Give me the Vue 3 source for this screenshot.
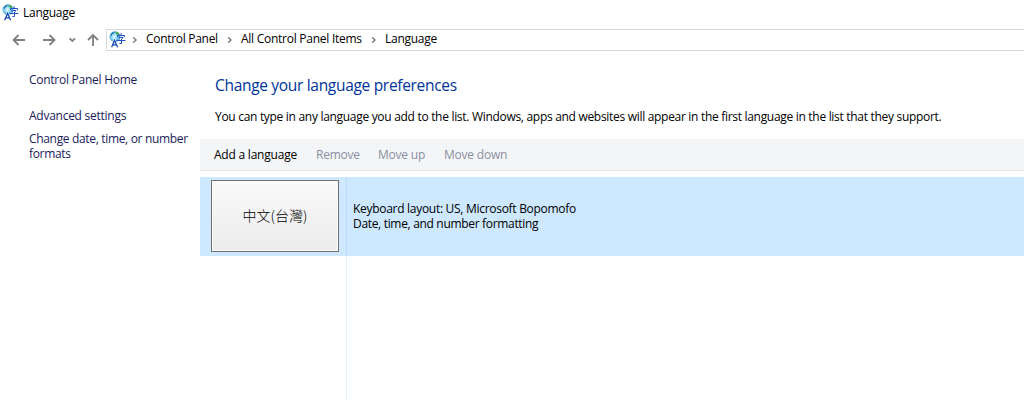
<script setup>
const crumbs = ['Control Panel', 'All Control Panel Items', 'Language']
</script>

<template>
  <div class="window">
    <svg width="0" height="0" class="defs">
      <defs>
        <radialGradient id="globe" cx="0.45" cy="0.5" r="0.6">
          <stop offset="0" stop-color="#e6faff" />
          <stop offset="0.5" stop-color="#86d2f2" />
          <stop offset="1" stop-color="#2f7cc4" />
        </radialGradient>
        <symbol id="lang" viewBox="0 0 17 17">
          <circle cx="5.9" cy="5.7" r="5.4" fill="url(#globe)" />
          <path d="M1.4 4C2.2 1.8 4 .7 5.6.7L5 2.6 3.2 3.6 2.4 5.4Z" fill="#2b86b8" />
          <path d="M6.4.7C8.6.7 10.2 1.9 10.9 3.4L9 4.2 7.2 3Z" fill="#48ab50" />
          <path d="M2.6 16 5.6 9.5 8.6 16" fill="none" stroke="#fff" stroke-width="2.6" opacity=".7" />
          <path d="M8.5 6V4.5H15.5V6M12.1 2.2V4.5M9.6 6.5H14.2L12.5 8V12.5H10.4M7.6 9.5H16.4" fill="none" stroke="#2252c8" stroke-width="1" />
          <path d="M2.6 16.2 5.6 9.4 8.6 16.2M3.8 13.9H7.4" fill="none" stroke="#1443b4" stroke-width="1.25" />
        </symbol>
      </defs>
    </svg>

    <header class="title"><svg class="app-icon"><use href="#lang" /></svg><span class="t-title">Language</span></header>

    <nav class="nav">
      <svg class="arrows" width="106" height="24" fill="none" stroke="#808080" stroke-width="1.8">
        <path d="M25 12H13.5M18.5 7 13.5 12 18.5 17" />
        <path d="M43 12H54.5M49.5 7 54.5 12 49.5 17" />
        <path d="M69.5 10.3 72.3 13 75.1 10.3" />
        <path d="M93 18V7M88 12 93 7 98 12" />
      </svg>
      <div class="address">
        <svg class="app-icon"><use href="#lang" /></svg>
        <template v-for="(c, i) in crumbs" :key="c">
          <svg class="chev" width="6" height="8" fill="none" stroke="#808080" stroke-width="1.5"><path d="M1.2 1.2 4 4 1.2 6.8" /></svg>
          <span :class="['crumb', 't-crumb' + i]">{{ c }}</span>
        </template>
      </div>
    </nav>

    <div class="body">
      <aside class="side">
        <a class="t-home">Control Panel Home</a>
        <a class="t-adv">Advanced settings</a>
        <a class="t-date">Change date, time, or number<br>formats</a>
      </aside>
      <main class="main">
        <h1><span class="t-head">Change your language preferences</span></h1>
        <p class="desc"><span class="t-desc">You can type in any language you add to the list. Windows, apps and websites will appear in the first language in the list that they support.</span></p>
        <div class="toolbar">
          <span class="tool t-add">Add a language</span>
          <span class="tool off t-rem">Remove</span>
          <span class="tool off t-up">Move up</span>
          <span class="tool off t-down">Move down</span>
        </div>
        <div class="list">
          <div class="row">
            <div class="tile-cell"><div class="tile"><span class="t-tile">中文(台灣)</span></div></div>
            <div class="info">
              <div class="t-kb">Keyboard layout: US, Microsoft Bopomofo</div>
              <div class="t-fmt">Date, time, and number formatting</div>
            </div>
          </div>
          <div class="rest"></div>
        </div>
      </main>
    </div>
  </div>
</template>

<style>
body { background: #fff; }
</style>

<style scoped>
.window { width: 1024px; height: 400px; overflow: hidden; background: #fff; color: #000; font: 12px/15px "Open Sans", "Noto Sans", sans-serif; letter-spacing: -0.26px; white-space: nowrap; display: flex; flex-direction: column; }
.defs { display: block; height: 0; flex: none; }
.app-icon { width: 17px; height: 17px; flex: none; }
.title { height: 24px; display: flex; align-items: center; padding-left: 2px; gap: 4px; box-sizing: border-box; flex: none; }
.nav { height: 28px; display: flex; align-items: center; flex: none; padding-top: 3px; box-sizing: border-box; }
.arrows { flex: none; display: block; }
.address { flex: 1; height: 22px; box-sizing: border-box; border: 1px solid #d9d9d9; border-right: 0; display: flex; align-items: center; padding-left: 2px; }
.chev { margin-left: 6px; flex: none; }
.crumb { margin-left: 8px; flex: none; padding-bottom: 2px; }
.crumb + .chev { margin-left: 9px; }
.t-crumb0 { width: 72px; letter-spacing: -0.3px; }
.t-crumb1 { width: 121px; }
.body { flex: 1; display: flex; }
.side { width: 200px; flex: none; display: flex; flex-direction: column; padding: 20px 0 0 29px; box-sizing: border-box; color: #1b1b5c; }
.t-adv { margin-top: 21px; }
.t-date { margin-top: 8px; letter-spacing: -0.33px; }
.main { flex: 1; display: flex; flex-direction: column; }
h1 { margin: 0; padding: 21px 0 0 15px; font-weight: 400; font-size: 15.5px; line-height: 24px; letter-spacing: -0.31px; color: #003399; }
.desc { margin: 12px 0 15px; padding-left: 15px; letter-spacing: -0.302px; }
.toolbar { height: 32px; box-sizing: border-box; background: #f4f5f7; border-bottom: 1px solid #e6e6e6; display: flex; align-items: center; padding-left: 14px; flex: none; }
.tool { flex: none; letter-spacing: -0.22px; }
.t-add { width: 102px; }
.t-rem { width: 62px; }
.t-up { width: 66px; }
.off { color: #8b8fa3; }
.list { margin-top: 6px; flex: 1; display: flex; flex-direction: column; }
.row { height: 79px; background: #cde8ff; display: flex; flex: none; }
.tile-cell { width: 147px; box-sizing: border-box; border-right: 1px solid #b9dcfb; padding: 3px 0 0 11px; }
.tile { width: 128px; height: 72px; box-sizing: border-box; border: 1px solid #707070; box-shadow: inset 0 0 0 1px #fbfbfb; background: linear-gradient(#fafafa, #ececec); display: flex; align-items: center; justify-content: center; font: 300 14px/18px "Noto Sans CJK TC", sans-serif; letter-spacing: 0; padding-bottom: 3px; }
.info { padding: 24px 0 0 6px; letter-spacing: -0.29px; }
.t-fmt { letter-spacing: -0.32px; }
.rest { width: 147px; flex: 1; box-sizing: border-box; border-right: 1px solid #e5f0fd; }
</style>
